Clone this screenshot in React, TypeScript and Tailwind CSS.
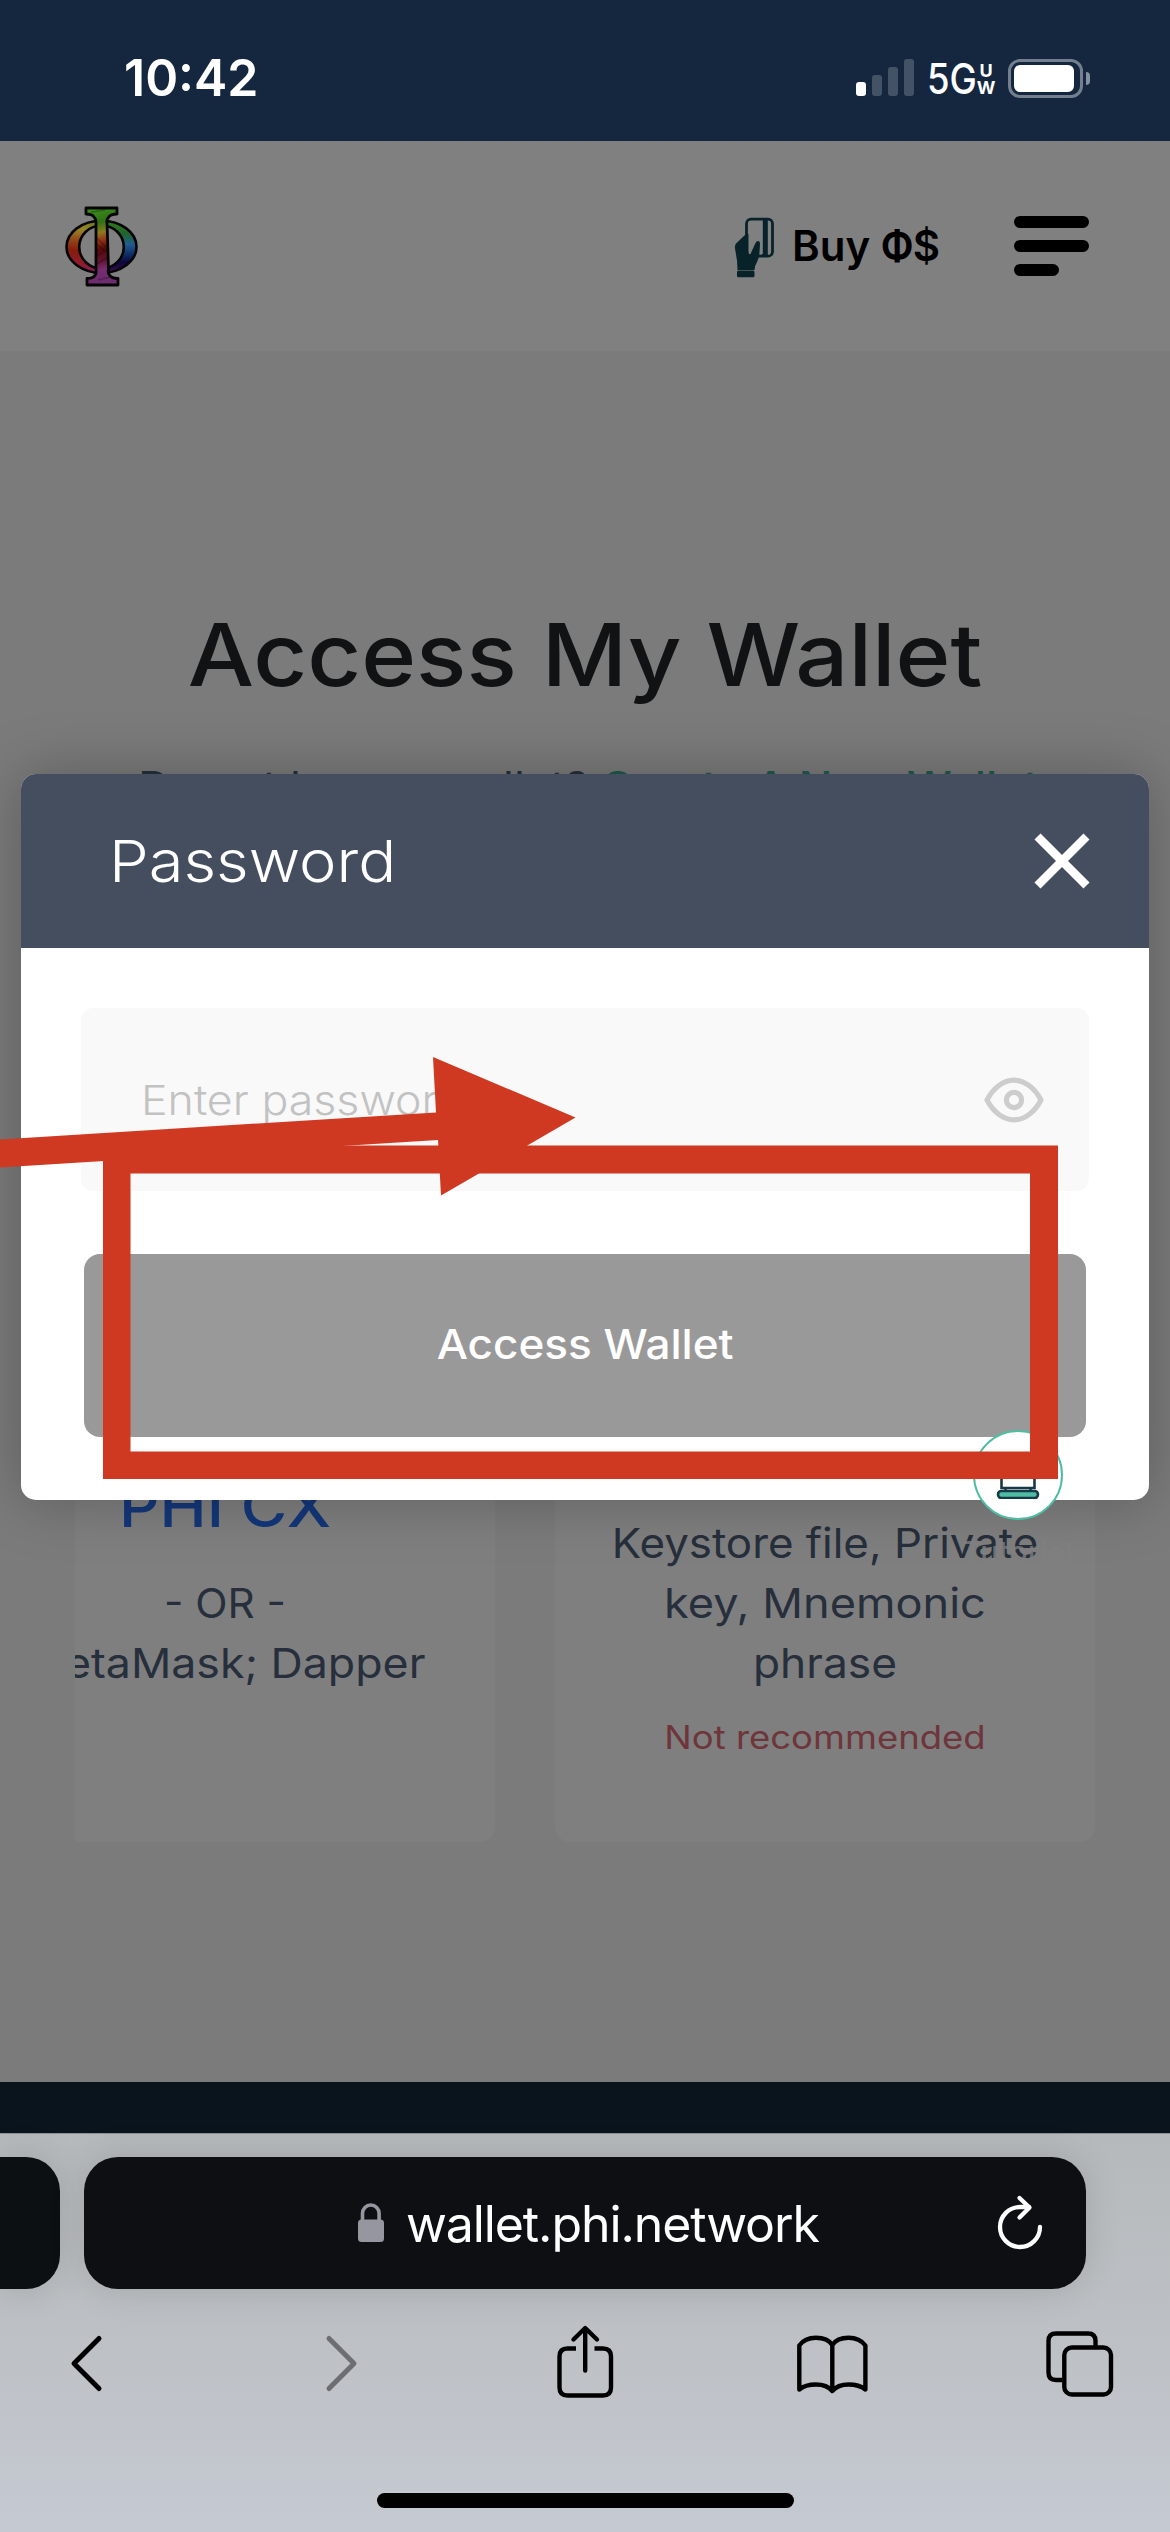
import React from 'react';

function StatusBar() {
  return (
    <div className="flex h-[141px] items-center bg-[#14273f] pt-[15px] text-white">
      <span className="ml-[124px] w-[139px] origin-left scale-x-[0.98] text-[51px] leading-[60px] font-semibold">10:42</span>
      <div className="ml-[593px] mt-[-1px] flex h-[37px] items-end gap-[6px]">
        <div className="h-[14px] w-[10px] rounded-[3px] bg-white" />
        <div className="h-[21px] w-[10px] rounded-[3px] bg-[#435265]" />
        <div className="h-[29px] w-[10px] rounded-[3px] bg-[#435265]" />
        <div className="h-[37px] w-[10px] rounded-[3px] bg-[#435265]" />
      </div>
      <div className="ml-[13px] mt-[2px] flex h-[44px] w-[68px] items-center">
        <span className="w-[50px] origin-left scale-x-[0.87] text-[42px] leading-[44px] font-medium">5G</span>
        <span className="flex w-[18px] flex-col items-center text-[18px] leading-[17px] font-bold">
          <span>U</span>
          <span>W</span>
        </span>
      </div>
      <div className="ml-[13px] flex items-center gap-[3px]">
        <div className="flex h-[39px] w-[75px] items-center rounded-[12px] border-[3px] border-[#737f8e] pl-[3px]">
          <div className="h-[27px] w-[60px] rounded-[6px] bg-white" />
        </div>
        <div className="h-[13px] w-[4px] rounded-r-full bg-[#8590a0]" />
      </div>
    </div>
  );
}

function PhiLogo() {
  const ring = 'M46.500 24.800a35 26 0 1 0 0 52a35 26 0 1 0 0-52zM46.500 29.500a22.300 21.500 0 1 1 0 43a22.300 21.500 0 1 1 0-43z';
  return (
    <svg className="ml-[55px] h-[100px] w-[100px]" viewBox="0 0 100 100">
      <defs>
        <linearGradient id="left" x1="0.5" y1="0" x2="0.4" y2="1">
          <stop offset="0" stopColor="#6c7a1c" />
          <stop offset="0.2" stopColor="#988426" />
          <stop offset="0.4" stopColor="#93461a" />
          <stop offset="0.6" stopColor="#861c0e" />
          <stop offset="0.85" stopColor="#921c2c" />
          <stop offset="1" stopColor="#80206a" />
        </linearGradient>
        <linearGradient id="right" x1="0.5" y1="0" x2="0.5" y2="1">
          <stop offset="0" stopColor="#2f7e18" />
          <stop offset="0.25" stopColor="#1f642c" />
          <stop offset="0.45" stopColor="#235c90" />
          <stop offset="0.62" stopColor="#10346c" />
          <stop offset="0.8" stopColor="#0a053e" />
          <stop offset="1" stopColor="#460e52" />
        </linearGradient>
        <linearGradient id="stem" x1="0" y1="0" x2="0.1" y2="1">
          <stop offset="0" stopColor="#3f921c" />
          <stop offset="0.22" stopColor="#2f7016" />
          <stop offset="0.36" stopColor="#8c7a20" />
          <stop offset="0.45" stopColor="#963a18" />
          <stop offset="0.58" stopColor="#560a0a" />
          <stop offset="0.72" stopColor="#62122c" />
          <stop offset="0.84" stopColor="#762c70" />
          <stop offset="1" stopColor="#6c2c70" />
        </linearGradient>
        <clipPath id="lh"><path d="M0 0h46.500v100H0z" /></clipPath>
        <clipPath id="rh"><path d="M46.500 0H100v100H46.500z" /></clipPath>
      </defs>
      <path d={ring} fill="url(#left)" fillRule="evenodd" clipPath="url(#lh)" />
      <path d={ring} fill="url(#right)" fillRule="evenodd" clipPath="url(#rh)" />
      <path d={ring} fill="none" stroke="#050505" strokeWidth="2.600" />
      <path
        d="M31 12h31v6q-7 0-9 4q-1.500 2-1 4L53.500 73q-1 4 1 6q2 3.500 8.500 3.500V89H32v-6.500q7 0 8.500-4q1-2 .5-5V26q0-3-2-5q-2-3-8-3z"
        fill="url(#stem)"
        stroke="#050505"
        strokeWidth="2.800"
        strokeLinejoin="round"
      />
      <path d="M42 42l9 9M42 48l9 8M42 68l10-6M42 60l9-6M43 84l12-3M36 16l14-2" stroke="#000" strokeOpacity="0.25" strokeWidth="1.500" />
    </svg>
  );
}

function Header() {
  return (
    <div className="flex h-[210px] items-center bg-[#808080]">
      <PhiLogo />
      <svg className="ml-[570px] mt-[-2px] h-[90px] w-[60px]" viewBox="0 0 60 90">
        <rect x="21.500" y="19.200" width="26" height="37" rx="4.500" fill="none" stroke="#08222a" strokeWidth="2.800" />
        <path d="M37.800 18.500h5V57h-6v-3h1z" fill="#08222a" />
        <path d="M24 34h12.500v18H24z" fill="#808080" />
        <path d="M20 35l-9 8.500q-1.500 2-1 5l2 12 .5 9.500h17q0-4 2.500-8q2.500-5 2.500-10l.5-8q0-3-2-3q-2 0-3 3l-4.500 10q-2 1-2-3V34z" fill="#08222a" />
        <rect x="12" y="70.500" width="17.500" height="6.800" rx="1.500" fill="#08222a" />
      </svg>
      <span className="ml-[7px] w-[159px] text-[42px] leading-[50px] font-[560] whitespace-pre text-black">
        Buy <span className="inline-block w-[32px] origin-left scale-x-[0.86] font-bold">Φ</span>$
      </span>
      <div className="ml-[63px] flex w-[75px] flex-col gap-3">
        <div className="h-3 rounded-full bg-black" />
        <div className="h-3 rounded-full bg-black" />
        <div className="h-3 w-[45px] rounded-full bg-black" />
      </div>
    </div>
  );
}

function Page() {
  return (
    <main className="h-[1731px] overflow-hidden bg-[#7b7b7b] pt-[254px] text-center text-[41px] leading-[60px] font-[370] text-[#262f3b]">
      <h1 className="scale-x-[1.075] text-[87px] leading-[100px] font-[480] text-[#111213]">Access My Wallet</h1>
      <p className="mt-[51px] ml-[138px] w-[830px] origin-left scale-x-[1.09] text-left whitespace-pre">
        Do not have a wallet? <span className="font-[450] text-[#1f5a4a]">Create A New Wallet</span>
      </p>
      <div className="mt-[84px] ml-[75px] flex h-[942px] w-[1035px] gap-[60px] overflow-hidden">
        <div className="ml-[-120px] w-[540px] shrink-0 rounded-[15px] bg-[#7f7f7f] pt-[577px]">
          <div className="scale-x-[1.11] text-[57px] leading-[60px] font-[450] text-[#14377a]">PHI CX</div>
          <div className="mt-[36px] scale-x-[1.03]">- OR -</div>
          <div className="scale-x-[1.09]">MetaMask; Dapper</div>
        </div>
        <div className="w-[540px] shrink-0 rounded-[15px] bg-[#7f7f7f] pt-[613px]">
          <div className="scale-x-[1.07]">Keystore file, Private</div>
          <div className="scale-x-[1.1]">key, Mnemonic</div>
          <div className="scale-x-[1.08]">phrase</div>
          <div className="mt-[20px] scale-x-[1.14] text-[32px] leading-[50px] text-[#6e353b]">Not recommended</div>
        </div>
      </div>
    </main>
  );
}

function PasswordModal() {
  return (
    <div className="absolute top-[774px] left-[21px] h-[726px] w-[1128px] rounded-[15px] bg-white shadow-[0_0_60px_rgba(0,0,0,0.26)]">
      <div className="flex h-[174px] items-center justify-between rounded-t-[15px] bg-[#454e5f] pr-[59px] pl-[88px]">
        <span className="origin-left scale-x-[1.09] text-[58px] leading-[70px] font-[330] text-white">Password</span>
        <svg className="h-[56px] w-[56px]" viewBox="0 0 56 56">
          <path d="M3.500 3.500l49 49M52.500 3.500l-49 49" stroke="#fff" strokeWidth="8.500" />
        </svg>
      </div>
      <div className="mx-[60px] mt-[60px] flex h-[183px] items-center justify-between rounded-[12px] bg-[#f9f9f9] pr-[44px] pl-[60px]">
        <span className="origin-left scale-x-[1.09] text-[41px] leading-[50px] font-[330] text-[#c2c2c2]">Enter password</span>
        <svg className="h-[48px] w-[62px]" viewBox="0 0 62 48" fill="none" stroke="#cdcdcd" strokeWidth="5.200">
          <path d="M4 24C10 12.500 20 4.200 31 4.200S52 12.500 58 24C52 35.500 42 43.800 31 43.800S10 35.500 4 24z" strokeLinejoin="round" />
          <circle cx="31" cy="24" r="7.600" />
        </svg>
      </div>
      <div className="mt-[63px] ml-[63px] flex h-[183px] w-[1002px] items-center justify-center rounded-[16px] bg-[#999999] pb-[3px]">
        <span className="scale-x-[1.075] text-[41px] leading-[50px] font-[450] text-white">Access Wallet</span>
      </div>
    </div>
  );
}

function TutorialBadge() {
  return (
    <div className="absolute top-[1430px] left-[947px] flex w-[142px] flex-col items-center">
      <div className="flex h-[90px] w-[90px] items-end justify-center rounded-full border-2 border-[#4fbda5] bg-white">
        <svg className="mb-[19px] h-[46px] w-[46px]" viewBox="0 0 46 46" stroke="#173a46" strokeWidth="2.600">
          <path d="M6.500 10h33v25h-33z" fill="#fff" />
          <path d="M10.500 35v4M35.500 35v4" />
          <rect x="3" y="38" width="40" height="7" rx="3.500" fill="#4fbda5" />
        </svg>
      </div>
      <span className="mt-[14px] scale-x-[1.03] text-[30px] leading-[36px] font-medium text-[#808080]/80">Tutorial</span>
    </div>
  );
}

function Markup() {
  return (
    <svg className="absolute top-[1050px] left-0 h-[440px] w-[1170px]" viewBox="0 1050 1170 440" fill="#cf3921">
      <path d="M103 1145.500H1058V1479H103zM130.500 1173.500V1451.500H1030V1173.500z" fillRule="evenodd" />
      <path d="M-2 1139.500L436 1112.500L433 1057L575.500 1117.500L441 1195.500L438 1140L-2 1167.500z" />
    </svg>
  );
}

function Toolbar() {
  return (
    <div className="flex h-[399px] flex-col border-t border-[#8d9298] bg-linear-to-b from-[#b6b9bc] via-[#bcc0c4] via-45% to-[#c5c9d1] text-black">
      <div className="mt-[23px] flex h-[132px] gap-6">
        <div className="w-[60px] rounded-r-[34px] bg-[#0d1013] shadow-[0_0_36px_rgba(0,0,0,0.13)]" />
        <div className="flex w-[1002px] items-center rounded-[34px] bg-[#0d0f12] pl-[273px] text-white shadow-[0_0_36px_rgba(0,0,0,0.13)]">
          <svg className="h-[40px] w-[28px]" viewBox="0 0 28 40">
            <path d="M5.500 18V10.500a8.300 8.500 0 0 1 16.600 0V18" fill="none" stroke="#9696a0" strokeWidth="3.600" />
            <rect x="1" y="16.500" width="26" height="22.500" rx="3.500" fill="#9696a0" />
          </svg>
          <span className="mt-[2px] ml-[21px] w-[440px] text-[50px] leading-[60px] tracking-[-1.1px]">wallet.phi.network</span>
          <svg className="ml-[148px] h-[60px] w-[52px] shrink-0" viewBox="994 2192 52 60" fill="none" stroke="#fff" strokeWidth="4.300" strokeLinecap="round" strokeLinejoin="round">
            <path d="M1040 2226A20 20 0 1 1 1020 2206H1029" />
            <path d="M1019.500 2197L1029.500 2206.500L1019.500 2216.500" />
          </svg>
        </div>
      </div>
      <div className="mt-[34px] ml-[66px] flex h-[80px]">
        <svg className="h-[80px] w-[40px]" viewBox="66 2323 40 80" fill="none" stroke="#000" strokeWidth="5" strokeLinecap="round" strokeLinejoin="round">
          <path d="M99 2338.500L74 2363.500L99 2388.500" />
        </svg>
        <svg className="ml-[215px] h-[80px] w-[40px]" viewBox="321 2323 40 80" fill="none" stroke="#6c6e71" strokeWidth="5" strokeLinecap="round" strokeLinejoin="round">
          <path d="M329 2338.500L354 2363.500L329 2388.500" />
        </svg>
        <svg className="ml-[194px] h-[80px] w-[61px]" viewBox="555 2323 61 80" fill="none" stroke="#000" strokeWidth="4.400" strokeLinejoin="round">
          <path d="M576 2348.500H567.500Q559.500 2348.500 559.500 2356.500V2387.500Q559.500 2395.500 567.500 2395.500H603Q611 2395.500 611 2387.500V2356.500Q611 2348.500 603 2348.500H594.500" />
          <path d="M585.200 2328.500V2370.500M573.500 2339.500L585.200 2328L597 2339.500" strokeLinecap="round" />
        </svg>
        <svg className="ml-[179px] h-[80px] w-[75px]" viewBox="795 2323 75 80" fill="none" stroke="#000" strokeWidth="4.400" strokeLinejoin="round">
          <path d="M832.300 2345C829 2340 822.500 2337.800 816 2337.800C808.500 2337.800 802.500 2341 799.300 2345.500V2389.500C803.500 2386 809.500 2384.500 816 2384.500C822.500 2384.500 829 2387 832.300 2391C835.600 2387 842 2384.500 848.600 2384.500C855 2384.500 861 2386 865.400 2389.500V2345.500C862 2341 856 2337.800 848.600 2337.800C842 2337.800 835.600 2340 832.300 2345zV2391" />
        </svg>
        <svg className="ml-[174px] h-[80px] w-[72px]" viewBox="1044 2323 72 80" fill="none" stroke="#000" strokeWidth="4.400">
          <path d="M1062 2380H1056Q1048.500 2380 1048.500 2372.500V2341Q1048.500 2333.500 1056 2333.500H1088Q1095.500 2333.500 1095.500 2341V2346" />
          <rect x="1064.300" y="2347.500" width="46.700" height="47" rx="7.500" />
        </svg>
      </div>
      <div className="mx-auto mt-[90px] h-[15px] w-[417px] rounded-full bg-black" />
    </div>
  );
}

export default function App() {
  return (
    <div className="relative flex h-[2532px] w-[1170px] flex-col overflow-hidden bg-[#7b7b7b] font-[Inter,sans-serif]">
      <StatusBar />
      <Header />
      <Page />
      <div className="h-[51px] bg-[#09141d]" />
      <Toolbar />
      <PasswordModal />
      <TutorialBadge />
      <Markup />
    </div>
  );
}
